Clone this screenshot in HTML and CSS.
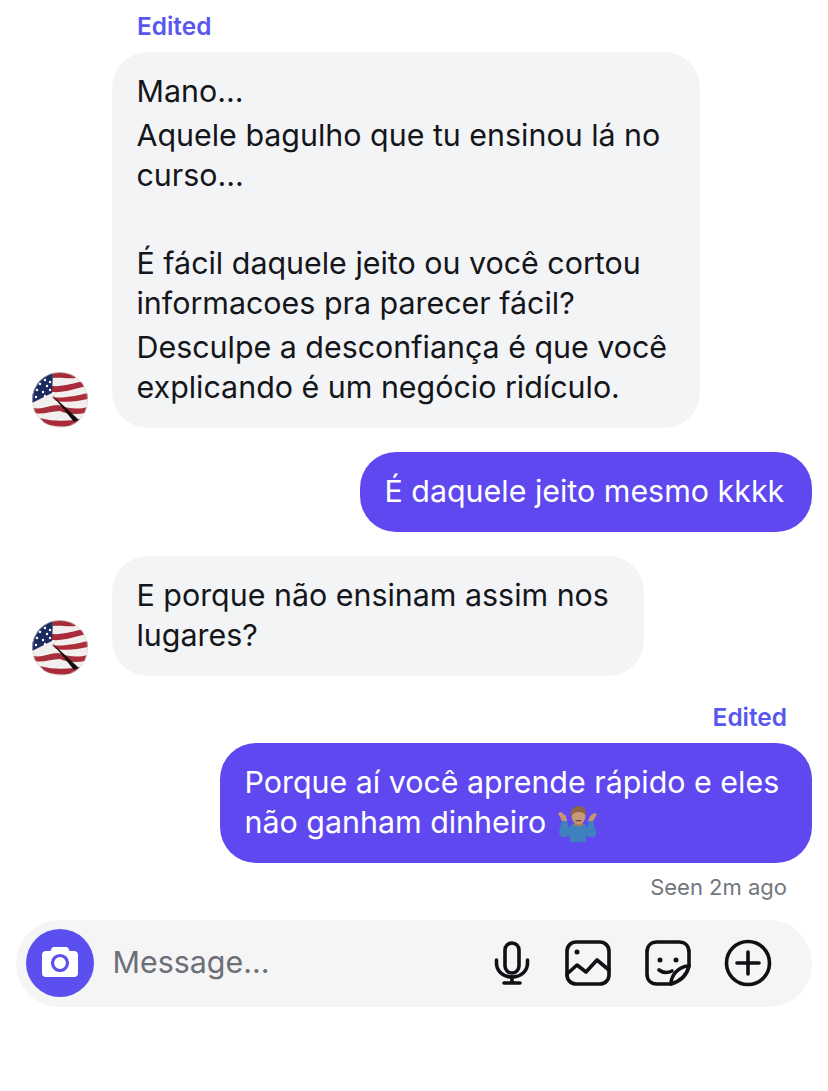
FILE: index.html
```html
<!DOCTYPE html>
<html lang="en">
<head>
  <meta charset="UTF-8" />
  <meta name="viewport" content="width=device-width, initial-scale=1.0" />
  <title>Messages</title>
  <link rel="stylesheet" href="styles.css">
</head>
<body>
  <svg class="defs" width="0" height="0" aria-hidden="true">
    <defs>
      <clipPath id="flag-clip"><circle cx="28" cy="28" r="28" /></clipPath>
      <filter id="soft"><feGaussianBlur stdDeviation="0.45" /></filter>
      <g id="flag">
        <g clip-path="url(#flag-clip)">
          <rect width="56" height="56" fill="#f2efef" />
          <g filter="url(#soft)">
            <path d="M21 1 C28 -1 36 1 42 3 L44 6 C36 7 28 5 21 6 Z" fill="#a62c3a" />
            <path d="M20 14 C30 15 42 11 52 9 L54 14 C44 17 30 21 20 20 Z" fill="#a92c3a" />
            <path d="M20 25 C32 27 46 23 56 21 L56 27 C46 29 36 31 24 29 Z" fill="#ad2d3b" />
            <path d="M1 36 C10 38 18 33 26 33 C34 36 46 38 55 35 L53 41 C44 43 34 42 28 39 C20 39 10 43 3 41 Z" fill="#a82d3a" />
            <path d="M8 46 C22 50 36 49 50 47 L46 52 C34 56 20 55 12 51 Z" fill="#a92c39" />
            <path d="M21 0 L20 21 L0 31 L0 10 L14 0 Z" fill="#1e2c5e" />
            <g fill="#fff">
              <circle cx="13" cy="8" r="1.200" /><circle cx="18" cy="10" r="1.200" /><circle cx="8" cy="12" r="1.200" />
              <circle cx="15" cy="14" r="1.200" /><circle cx="5" cy="18" r="1.200" /><circle cx="11" cy="20" r="1.200" />
              <circle cx="18" cy="18" r="1.200" /><circle cx="4" cy="25" r="1.200" /><circle cx="13" cy="24" r="1.200" />
            </g>
            <path d="M20 23 L47 48 L42 50 Z" fill="#17100f" />
          </g>
        </g>
        <circle cx="28" cy="28" r="27.500" fill="none" stroke="#d9d4d4" stroke-opacity="0.6" />
      </g>
    </defs>
  </svg>

  <main class="thread">
    <div class="label label-in">Edited</div>
    <div class="row row-in">
      <svg class="avatar" viewBox="0 0 56 56"><use href="#flag" /></svg>
      <div class="bubble bubble-in bubble-wide">
        <p>Mano…</p>
        <p>Aquele bagulho que tu ensinou lá no curso…</p>
        <p class="blank">&nbsp;</p>
        <p>É fácil daquele jeito ou você cortou informacoes pra parecer fácil?</p>
        <p>Desculpe a desconfiança é que você explicando é um negócio ridículo.</p>
      </div>
    </div>

    <div class="row row-out">
      <div class="bubble bubble-out bubble-short">
        <p>É daquele jeito mesmo kkkk</p>
      </div>
    </div>

    <div class="row row-in">
      <svg class="avatar" viewBox="0 0 56 56"><use href="#flag" /></svg>
      <div class="bubble bubble-in bubble-mid">
        <p>E porque não ensinam assim nos lugares?</p>
      </div>
    </div>

    <div class="group-out">
      <div class="label label-out">Edited</div>
      <div class="row row-out">
        <div class="bubble bubble-out bubble-reply">
          <p>Porque aí você aprende rápido e eles não ganham dinheiro
            <svg class="emoji" viewBox="0 0 40 36" aria-label="shrug">
              <path d="M4 14 L1 26 C1 30 5 32 8 31 L12 30 L12 36 L28 36 L28 30 L32 31 C36 32 39 30 38 26 L35 14 L31 14 L29 22 L27 18 L14 18 L11 22 L9 14 Z" fill="#3f80bf" />
              <path d="M0 7 L3 6 L8 10 L9 15 L4 15 Z" fill="#c79670" />
              <path d="M39 8 L36 7 L32 10 L30 15 L35 15 Z" fill="#c79670" />
              <rect x="16" y="14" width="9" height="6" fill="#a97c5c" />
              <ellipse cx="20.500" cy="10" rx="7" ry="8" fill="#c69a76" />
              <path d="M13 11 C12 3 16 0 21 0 C26 0 29 4 28 11 C27 7 24 6 21 6 C17 6 15 7 13 11 Z" fill="#8f6444" />
              <path d="M17 14 H24 C23 16 18 16 17 14 Z" fill="#6b4a32" />
            </svg>
          </p>
        </div>
      </div>
    </div>
    <div class="seen">Seen 2m ago</div>

    <div class="composer">
      <div class="camera">
        <svg viewBox="0 0 40 40" width="40" height="40">
          <path d="M14 4 H26 C27.500 4 28.500 5 29 6.500 L29.500 8 H34 C36.500 8 38 9.500 38 12 V30 C38 33 36.500 34 34 34 H6 C3.500 34 2 33 2 30 V12 C2 9.500 3.500 8 6 8 H10.500 L11 6.500 C11.500 5 12.500 4 14 4 Z" fill="#fff" />
          <circle cx="20" cy="20" r="7.500" fill="none" stroke="#5b4ff0" stroke-width="3.200" />
        </svg>
      </div>
      <span class="placeholder">Message...</span>
      <div class="tools">
        <svg viewBox="0 0 48 48">
          <rect x="21" y="4" width="14" height="30" rx="7" />
          <path d="M12.500 21 V24 C12.500 32 19 38 28 38 C37 38 43.500 32 43.500 24 V21" />
          <path d="M28 38 V44 M20 44 H36" />
        </svg>
        <svg viewBox="0 0 48 48">
          <rect x="3" y="3" width="42" height="42" rx="9" />
          <circle cx="13" cy="13" r="2.500" class="dot" />
          <path d="M3 35 L13 26 L22 33 L33 21 L45 31" />
        </svg>
        <svg viewBox="0 0 48 48">
          <path d="M27 45 H13 C7 45 3 41 3 35 V13 C3 7 7 3 13 3 H35 C41 3 45 7 45 13 V27 C36 27 27 35 27 45 Z" />
          <path d="M27 45 C37 42 43 36 45 27" />
          <circle cx="16" cy="21" r="2.500" class="dot" />
          <circle cx="32" cy="21" r="2.500" class="dot" />
          <path d="M15 31 C19 34 24 34 28 32" />
        </svg>
        <svg viewBox="0 0 48 48">
          <circle cx="24" cy="24" r="21.500" />
          <path d="M24 13 V35 M13 24 H35" />
        </svg>
      </div>
    </div>
  </main>
</body>
</html>
```

FILE: styles.css
```css
* {
  box-sizing: border-box;
}

body {
  margin: 0;
  background: #fff;
  color: #14161a;
  font-family: 'Inter', 'Liberation Sans', sans-serif;
  font-size: 30.4px;
  line-height: 40px;
}

p {
  margin: 0;
}

.defs {
  position: absolute;
}

.thread {
  display: flex;
  flex-direction: column;
  padding: 9px 16px 0;
}

.label {
  font-size: 24.4px;
  font-weight: 600;
  line-height: 34px;
  color: #5757ee;
  margin-bottom: 9px;
}

.label-in {
  padding-left: 121px;
}

.label-out {
  text-align: right;
  padding-right: 25px;
}

.row {
  display: flex;
  align-items: flex-end;
  margin-bottom: 24px;
}

.row-in {
  padding-left: 16px;
  gap: 24px;
}

.row-out {
  justify-content: flex-end;
}

.group-out .row {
  margin-bottom: 10px;
}

.avatar {
  width: 56px;
  height: 56px;
  flex: none;
}

.bubble {
  border-radius: 36px;
  padding: 19px 25px 21px 24.5px;
}

.bubble p + p {
  margin-top: 4px;
}

.bubble-in {
  background: #f3f4f6;
}

.bubble-out {
  background: #5f48ef;
  color: #fff;
}

.bubble-wide {
  width: 588px;
}

.bubble-mid {
  width: 532px;
}

.bubble-short {
  width: 452px;
  padding-right: 23.5px;
  white-space: nowrap;
}

.bubble-reply {
  width: 592px;
}

.emoji {
  width: 40px;
  height: 36px;
  margin-left: 3px;
  vertical-align: -9px;
}

.seen {
  font-size: 22px;
  line-height: 28px;
  color: #72767c;
  text-align: right;
  padding-right: 25px;
  margin-bottom: 19px;
}

.composer {
  display: flex;
  align-items: center;
  height: 87px;
  padding: 0 40px 2px 10px;
  border-radius: 44px;
  background: #f5f5f6;
}

.camera {
  width: 68px;
  height: 68px;
  border-radius: 50%;
  background: #5b4ff0;
  display: flex;
  align-items: center;
  justify-content: center;
}

.placeholder {
  margin: 0 0 2px 18.5px;
  color: #6b7077;
}

.tools {
  margin-left: auto;
  display: flex;
  gap: 32px;
}

.tools svg {
  width: 48px;
  height: 48px;
  fill: none;
  stroke: #0f1115;
  stroke-width: 3.6;
  stroke-linecap: round;
  stroke-linejoin: round;
}

.tools .dot {
  fill: #0f1115;
  stroke: none;
}
```
